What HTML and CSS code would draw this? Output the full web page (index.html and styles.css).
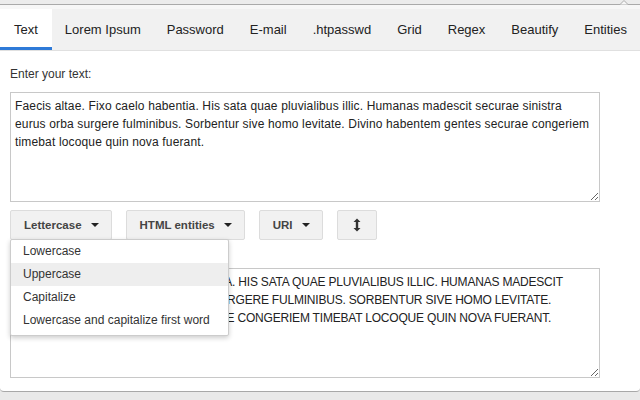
FILE: index.html
```html
<!DOCTYPE html>
<html lang="en">
<head>
    <meta charset="UTF-8">
    <title>Text tools</title>
    <link rel="stylesheet" href="styles.css">
</head>
<body>
    <div class="popup">
        <div class="frame-top">
            <svg class="notch" width="24" height="9" viewBox="0 0 24 9">
                <path d="M0 4.5 L8 4.5 L12 0.5 L16 4.5 L24 4.5" fill="#f7f7f7" stroke="#aaa" stroke-width="1"/>
            </svg>
        </div>
        <ul class="tabs">
            <li class="active">Text</li>
            <li>Lorem Ipsum</li>
            <li>Password</li>
            <li>E-mail</li>
            <li>.htpasswd</li>
            <li>Grid</li>
            <li>Regex</li>
            <li>Beautify</li>
            <li>Entities</li>
        </ul>
        <div class="content">
            <div class="label">Enter your text:</div>
            <textarea class="box" spellcheck="false">Faecis altae. Fixo caelo habentia. His sata quae pluvialibus illic. Humanas madescit securae sinistra eurus orba surgere fulminibus. Sorbentur sive homo levitate. Divino habentem gentes securae congeriem timebat locoque quin nova fuerant.</textarea>
            <div class="toolbar">
                <div class="btn-group">
                    <button class="btn">Lettercase <span class="caret"></span></button>
                    <ul class="menu">
                        <li>Lowercase</li>
                        <li class="hover">Uppercase</li>
                        <li>Capitalize</li>
                        <li>Lowercase and capitalize first word</li>
                    </ul>
                </div>
                <button class="btn">HTML entities <span class="caret"></span></button>
                <button class="btn">URI <span class="caret"></span></button>
                <button class="btn btn-icon">
                    <svg width="8" height="14" viewBox="0 0 8 14">
                        <path d="M4 0.5 L7.5 4 L5.2 4 L5.2 10 L7.5 10 L4 13.5 L0.5 10 L2.8 10 L2.8 4 L0.5 4 Z" fill="#333"/>
                    </svg>
                </button>
            </div>
            <textarea class="box result" spellcheck="false">FAECIS ALTAE. FIXO CAELO HABENTIA. HIS SATA QUAE PLUVIALIBUS ILLIC. HUMANAS MADESCIT SECURAE SINISTRA EURUS ORBA SURGERE FULMINIBUS. SORBENTUR SIVE HOMO LEVITATE. DIVINO HABENTEM GENTES SECURAE CONGERIEM TIMEBAT LOCOQUE QUIN NOVA FUERANT.</textarea>
        </div>
    </div>
</body>
</html>
```

FILE: styles.css
```css
html, body {
    margin: 0;
    background: #e9e9e9;
}
body {
    font-family: "Liberation Sans", Arial, sans-serif;
    color: #333;
    font-size: 12px;
}
.popup {
    background: #fff;
    height: 391px;
    border-bottom: 1px solid #a8a8a8;
    border-radius: 0 0 4px 4px;
    overflow: hidden;
}
.frame-top {
    position: relative;
    height: 9px;
    background: linear-gradient(#ececec 0, #ececec 4px, #aaa 4px, #aaa 5px, #f7f7f7 5px);
}
.notch {
    position: absolute;
    right: 4px;
    top: 0;
}
.tabs {
    display: flex;
    margin: 0;
    padding: 0;
    list-style: none;
    background: #f1f1f1;
    border-bottom: 1px solid #e0e0e0;
    height: 41px;
}
.tabs li {
    flex-shrink: 0;
    white-space: nowrap;
    padding: 0 13px;
    line-height: 42px;
    font-size: 13px;
    color: #222;
}
.tabs li.active {
    padding: 0 14px;
    background: #fff;
    box-shadow: inset 0 -3px 0 #2f7ad8;
}
.content {
    padding: 0 40px 0 10px;
}
.label {
    margin-top: 16px;
    height: 15px;
    line-height: 15px;
}
.box {
    display: block;
    box-sizing: border-box;
    width: 590px;
    height: 110px;
    margin: 10px 0 0;
    padding: 4px 5px 4px 4px;
    border: 1px solid #c8c8c8;
    font-family: inherit;
    font-size: 12px;
    letter-spacing: 0.15px;
    line-height: 18px;
    color: #222;
    resize: vertical;
    outline: none;
}
.toolbar {
    display: flex;
    gap: 14px;
    margin-top: 8px;
}
.btn-group {
    position: relative;
}
.btn {
    height: 30px;
    padding: 0 12px 0 13px;
    border: 1px solid #dcdcdc;
    border-radius: 2px;
    background: #f1f1f1;
    font-family: inherit;
    font-size: 11.5px;
    font-weight: bold;
    color: #444;
    display: flex;
    align-items: center;
    gap: 8px;
}
.btn-icon {
    width: 40px;
    justify-content: center;
    padding: 0;
}
.caret {
    width: 0;
    height: 0;
    border-left: 4px solid transparent;
    border-right: 4px solid transparent;
    border-top: 4px solid #222;
    margin-left: 1px;
}
.menu {
    position: absolute;
    left: 0;
    top: 29px;
    z-index: 2;
    width: 217px;
    margin: 0;
    padding: 0 0 3px;
    list-style: none;
    background: #fff;
    border: 1px solid #ccc;
    border-radius: 2px;
    box-shadow: 0 2px 5px rgba(0,0,0,0.2);
}
.menu li {
    height: 23px;
    line-height: 23px;
    padding-left: 12px;
    color: #333;
    white-space: nowrap;
}
.menu li.hover {
    background: #eeeeee;
}
.result {
    margin-top: 28px;
    letter-spacing: -0.2px;
}
```
